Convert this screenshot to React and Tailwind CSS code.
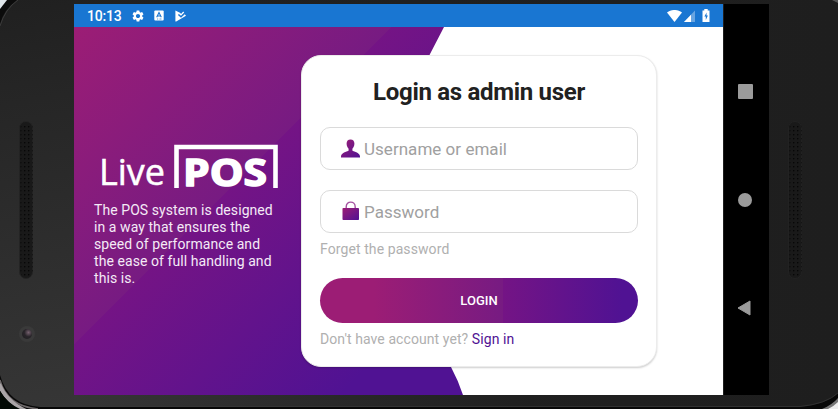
import { MdSettings } from "react-icons/md";

function Speaker() {
  return (
    <svg className="block h-[158px] w-[14px]" viewBox="0 0 14 158">
      <defs>
        <pattern id="holes" width="4" height="4" patternUnits="userSpaceOnUse">
          <rect x="1" y="1" width="1.4" height="1.4" fill="#070707" />
        </pattern>
      </defs>
      <rect x="0.5" y="0.5" width="13" height="157" rx="6.5" fill="#191919" stroke="#252525" strokeWidth="0.8" />
      <rect x="1.5" y="3" width="12" height="152" rx="4" fill="url(#holes)" />
    </svg>
  );
}

function StatusBar() {
  return (
    <div className="flex h-[23px] shrink-0 items-center bg-[#1976d2] pl-[13px] pr-[13px] text-white">
      <span className="w-[45px] pt-[2px] text-[14px] leading-[23px] font-medium tracking-[-0.2px]">10:13</span>
      <MdSettings className="-ml-px h-[14px] w-[14px]" />
      <svg className="ml-[9px] h-[11px] w-[10px]" viewBox="0 0 10 11">
        <rect x="0.3" y="0.5" width="9.4" height="10" rx="1" fill="#fff" />
        <path d="M2.7 7.2 5 2.5l2.3 4.7M3.5 6h3" fill="none" stroke="#1976d2" strokeWidth="1.1" />
        <path d="M3 9h1.2M5.5 9h2" stroke="#1976d2" strokeWidth="0.7" />
      </svg>
      <svg className="ml-[11px] h-[12px] w-[11px]" viewBox="0 0 11 12">
        <path d="M.4.500 5.400 3l.6.900L8.200 1.600l1 1L6 5.800 3.900 3.900 2.900 4.900 6 7.800 9.800 4.300l1.200 1.400L1.200 11.500H.4Z" fill="#fff" />
      </svg>
      <div className="flex-1" />
      <svg className="h-[12px] w-[15px]" viewBox="0 0 15 12">
        <path d="M0 2.600C4.400-.9 10.600-.9 15 2.600L7.500 12Z" fill="#fff" />
      </svg>
      <svg className="ml-[2px] h-[12px] w-[11px]" viewBox="0 0 11 12">
        <path d="M11 .5V12H0Z" fill="#fff" opacity="0.35" />
        <path d="M7 4.700V12H0Z" fill="#fff" />
      </svg>
      <svg className="ml-[7px] h-[13px] w-[8px]" viewBox="0 0 8 13">
        <path d="M2.300 0h3.400v1.500H7.500V13H.5V1.500H2.300Z" fill="#fff" />
        <path d="M4.600 3.500 2.400 7.500h1.400v3.400l2.100-4.300H4.500Z" fill="#1976d2" />
      </svg>
    </div>
  );
}

function Backdrop() {
  return (
    <svg className="absolute inset-0 h-[368px] w-[649px]" viewBox="0 0 649 368">
      <defs>
        <linearGradient id="brand" gradientUnits="userSpaceOnUse" x1="0" y1="0" x2="317" y2="317">
          <stop offset="0" stopColor="#9c1d75" />
          <stop offset="0.5" stopColor="#771b82" />
          <stop offset="0.5" stopColor="#741485" />
          <stop offset="1" stopColor="#501293" />
        </linearGradient>
      </defs>
      <path d="M0 0H370L355.500 28C310 120 350 280 377 340Q384 353 389 368H0Z" fill="url(#brand)" />
    </svg>
  );
}

function Logo() {
  return (
    <svg className="block h-[46px] w-[190px] overflow-visible" viewBox="0 0 190 46">
      <text x="5" y="42" textLength="66" lengthAdjust="spacingAndGlyphs" fill="#fff" stroke="#fff" strokeWidth="0.5" className="font-['Open_Sans',sans-serif] text-[36px] font-normal">Live</text>
      <path d="M82.500 45V4H181.500V45" fill="none" stroke="#fff" strokeWidth="4.600" />
      <text x="89" y="42.500" textLength="84" lengthAdjust="spacingAndGlyphs" fill="#fff" stroke="#fff" strokeWidth="1.6" strokeLinejoin="round" className="font-['Open_Sans',sans-serif] text-[37.5px] font-bold">POS</text>
    </svg>
  );
}

function IconGradient({ id }) {
  return (
    <linearGradient id={id} x1="0" y1="0" x2="1" y2="1">
      <stop offset="0" stopColor="#9c1d75" />
      <stop offset="1" stopColor="#501293" />
    </linearGradient>
  );
}

function UserIcon() {
  return (
    <svg className="-mt-px h-[19px] w-[19px]" viewBox="0 0 19 19">
      <defs><IconGradient id="user" /></defs>
      <path d="M9.500.5C12 .5 13.400 2.100 13.400 4.600c0 2.300-.9 4.100-2 5.200v1.700c.5 1.200 7.600 1.600 7.600 6.100v.9H0v-.9c0-4.500 7.100-4.900 7.600-6.100V9.800c-1.100-1.100-2-2.900-2-5.200C5.600 2.100 7 .5 9.500.5Z" fill="url(#user)" />
    </svg>
  );
}

function LockIcon() {
  return (
    <svg className="-mt-[3px] h-[19px] w-[19px]" viewBox="0 0 19 19">
      <defs><IconGradient id="lock" /></defs>
      <path d="M5.200 8V6c0-6.500 9-6.500 9 0v2" fill="none" stroke="#a552a0" strokeWidth="1.400" />
      <rect x="1.500" y="7" width="16.500" height="12" rx="0.800" fill="url(#lock)" />
    </svg>
  );
}

function Field({ icon, label }) {
  return (
    <div className="flex h-[43px] items-center rounded-[10px] border border-[#dadada] bg-white pl-[20px]">
      {icon}
      <span className="ml-[4px] text-[17px] leading-[20px] tracking-[0.03px] text-[#a0a0a0]">{label}</span>
    </div>
  );
}

function LoginCard() {
  return (
    <div className="mt-[28px] h-[312px] w-[356px] rounded-[20px] border border-[#ececec] bg-white px-[18px] shadow-[0_1px_2px_rgba(0,0,0,0.2)]">
      <h1 className="mt-[21px] text-center text-[24px] leading-[30px] font-bold tracking-[-0.3px] text-[#212121]">Login as admin user</h1>
      <div className="mt-[20px] flex flex-col gap-[20px]">
        <Field icon={<UserIcon />} label="Username or email" />
        <Field icon={<LockIcon />} label="Password" />
      </div>
      <p className="mt-[7px] text-[14px] leading-[18px] tracking-[0.09px] text-[#b0b0b0]">Forget the password</p>
      <button className="mt-[20px] block h-[45px] w-full rounded-full bg-[linear-gradient(90deg,#9c1d75_17%,#771b82_57.500%,#741485_57.500%,#501293_95%)] text-[13px] font-medium text-white">LOGIN</button>
      <p className="mt-[7px] text-[14px] leading-[18px] tracking-[0.08px] text-[#b0b0b0]">
        Don&#39;t have account yet? <span className="text-[#501293]">Sign in</span>
      </p>
    </div>
  );
}

function Screen() {
  return (
    <div className="flex w-[649px] flex-col bg-white">
      <StatusBar />
      <div className="relative flex-1">
        <Backdrop />
        <div className="relative flex">
          <div className="w-[227px] pt-[116px] pl-[20px]">
            <Logo />
            <p className="mt-[13px] text-[14px] leading-[17px] tracking-[0.07px] whitespace-nowrap text-[#f4eaf6]">
              The POS system is designed<br />in a way that ensures the<br />speed of performance and<br />the ease of full handling and<br />this is.
            </p>
          </div>
          <LoginCard />
        </div>
      </div>
    </div>
  );
}

function NavBar() {
  return (
    <div className="ml-px flex w-[45px] flex-col items-center bg-black pr-[2px]">
      <div className="mt-[80px] h-[15px] w-[15px] rounded-[1px] bg-[#9b9b9b]" />
      <div className="mt-[94px] -ml-px h-[14px] w-[14px] rounded-full bg-[#9b9b9b]" />
      <svg className="mt-[93px] -ml-[3px] h-[16px] w-[14px]" viewBox="0 0 14 16">
        <path d="M13 1V15L1 8Z" fill="#9b9b9b" stroke="#9b9b9b" strokeLinejoin="round" />
      </svg>
    </div>
  );
}

function BodyEdges() {
  return (
    <svg className="absolute inset-0 h-[409px] w-[838px]" viewBox="0 0 838 409">
      <defs>
        <linearGradient id="chin">
          <stop offset="0" stopColor="#363636" />
          <stop offset="1" stopColor="#1f1f1f" />
        </linearGradient>
      </defs>
      <rect x="74" y="395" width="460" height="14" fill="url(#chin)" />
      <path d="M0 0H17Q4 9 0 24Z" fill="#0b0b0b" />
      <path d="M0 0H7L0 9Z" fill="#dfe5ea" />
      <path d="M18 0Q5 9 0 26" fill="none" stroke="#3b3b3b" />
      <path d="M0 375Q8 405 40 407H800Q828 404 838 393V409H0Z" fill="#080808" />
      <path d="M0 380Q7 406 38 409" fill="none" stroke="#6d6869" strokeWidth="1.500" />
      <path d="M-1 384Q6 402 26 411" fill="none" stroke="#aaa6a8" strokeWidth="4" />
      <path d="M0 391Q7 403 20 409H0Z" fill="#020a05" />
      <path d="M40 406.500H800Q826 404 838 393" fill="none" stroke="#3a3a3a" strokeWidth="0.700" />
      <path d="M822 409Q832 405 838 398V409Z" fill="#777" />
      <path d="M828 409Q834 406 838 402V409Z" fill="#eee" />
      <path d="M832 0 838 3V0Z" fill="#555" />
    </svg>
  );
}

export default function App() {
  return (
    <div className="relative flex h-[409px] w-[838px] overflow-hidden bg-[linear-gradient(90deg,#222222,#1e1e1e)] pt-[4px] pb-[14px] font-[Roboto,sans-serif]">
      <div className="absolute inset-y-0 left-0 w-[74px] bg-[linear-gradient(170deg,#202020,#262626_25%,#363636)]" />
      <BodyEdges />
      <div className="relative w-[74px] shrink-0 pt-[117px] pl-[19px]">
        <Speaker />
        <div className="mt-[47px] flex h-[16px] w-[16px] items-center justify-center rounded-full bg-[#3a3a3a]">
          <div className="h-[10px] w-[10px] rounded-full bg-[radial-gradient(circle_at_65%_35%,#75606e,#29252a_45%,#1c1b1e)]" />
        </div>
      </div>
      <div className="relative flex shrink-0"><Screen /><NavBar /></div>
      <div className="relative flex-1 pt-[117px] pl-[19px]"><Speaker /></div>
    </div>
  );
}
